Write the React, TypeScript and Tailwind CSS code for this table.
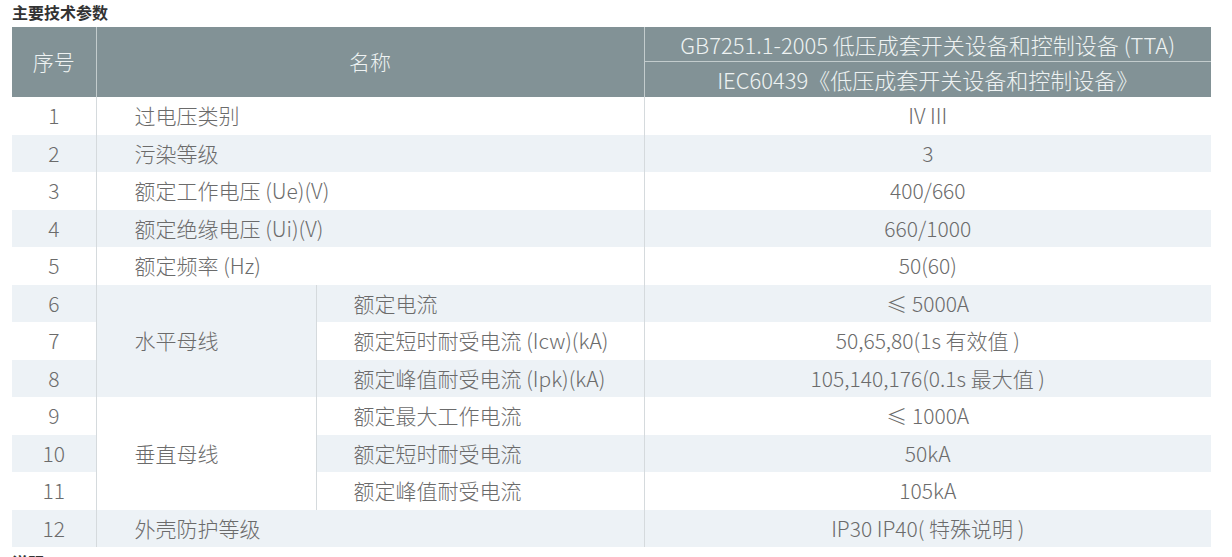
import * as React from 'react';

const font = { fontFamily: '"Noto Sans CJK SC", "Noto Sans", sans-serif' };

type Row = { no: number; name?: string; group?: string; span?: number; sub?: string; value: string };

const rows: Row[] = [
  { no: 1, name: '过电压类别', value: 'IV III' },
  { no: 2, name: '污染等级', value: '3' },
  { no: 3, name: '额定工作电压 (Ue)(V)', value: '400/660' },
  { no: 4, name: '额定绝缘电压 (Ui)(V)', value: '660/1000' },
  { no: 5, name: '额定频率 (Hz)', value: '50(60)' },
  { no: 6, group: '水平母线', span: 3, sub: '额定电流', value: '≤ 5000A' },
  { no: 7, sub: '额定短时耐受电流 (Icw)(kA)', value: '50,65,80(1s 有效值 )' },
  { no: 8, sub: '额定峰值耐受电流 (Ipk)(kA)', value: '105,140,176(0.1s 最大值 )' },
  { no: 9, group: '垂直母线', span: 3, sub: '额定最大工作电流', value: '≤ 1000A' },
  { no: 10, sub: '额定短时耐受电流', value: '50kA' },
  { no: 11, sub: '额定峰值耐受电流', value: '105kA' },
  { no: 12, name: '外壳防护等级', value: 'IP30 IP40( 特殊说明 )' },
];

export default function App() {
  return (
    <div className="w-[1232px] h-[557px] overflow-hidden bg-white" style={font}>
      <div className="pl-[12px] pt-[1px] h-[27px] text-[16px] font-bold leading-[22px] text-[#333]">主要技术参数</div>
      <table className="ml-[12px] w-[1199px] border-collapse table-fixed text-[21px] font-light text-[#6b6b6b]">
        <colgroup>
          <col className="w-[84px]" />
          <col className="w-[220px]" />
          <col className="w-[328px]" />
          <col className="w-[567px]" />
        </colgroup>
        <thead className="bg-[#829296] text-[#eef2f2]">
          <tr className="h-[34px]">
            <th rowSpan={2} className="font-light border-r border-[#c3cccd] text-center">序号</th>
            <th rowSpan={2} colSpan={2} className="font-light border-r border-[#c3cccd] text-center">名称</th>
            <th className="font-light text-[22px] border-b border-[#c3cccd] text-center leading-none">GB7251.1-2005 低压成套开关设备和控制设备 (TTA)</th>
          </tr>
          <tr className="h-[36px]">
            <th className="font-light text-[22px] text-center leading-none">IEC60439《低压成套开关设备和控制设备》</th>
          </tr>
        </thead>
        <tbody>
          {rows.map((r) => {
            const bg = r.no % 2 === 0 ? 'bg-[#edf2f6]' : 'bg-white';
            return (
              <tr key={r.no} className={`h-[37.5px] ${bg}`}>
                <td className="text-center border-r border-[#d5dadd] leading-none">{r.no}</td>
                {r.name && (
                  <td colSpan={2} className="pl-[38px] border-r border-[#d5dadd] leading-none">{r.name}</td>
                )}
                {r.group && (
                  <td rowSpan={r.span} className={`pl-[38px] border-r border-[#d5dadd] leading-none ${bg}`}>{r.group}</td>
                )}
                {r.sub && <td className="pl-[37px] border-r border-[#d5dadd] leading-none">{r.sub}</td>}
                <td className="text-center leading-none">{r.value}</td>
              </tr>
            );
          })}
        </tbody>
      </table>
      <div className="pl-[12px] pt-[4px] text-[16px] font-bold leading-[22px] text-[#333]">说明：</div>
    </div>
  );
}
